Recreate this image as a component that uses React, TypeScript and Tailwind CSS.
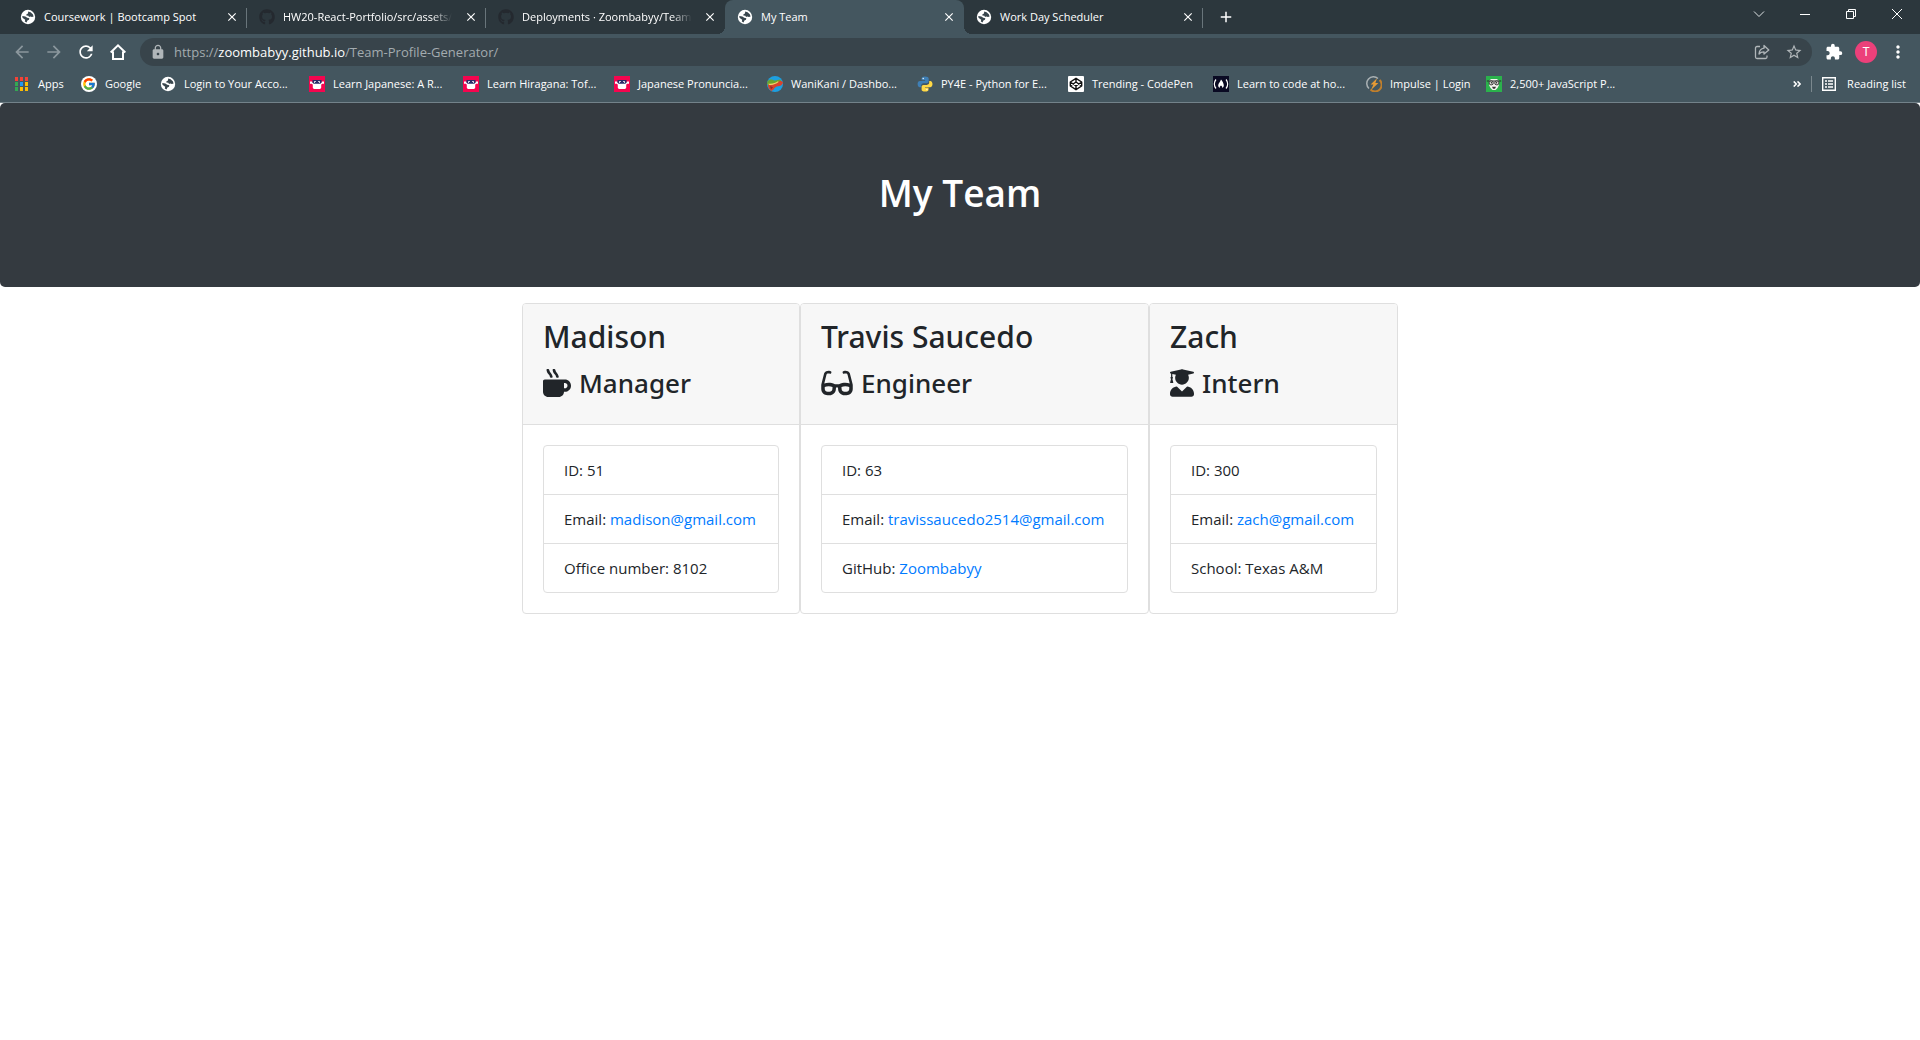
import React from "react";
import { FaGithub, FaGlasses, FaMugHot, FaUserGraduate } from "react-icons/fa";
import { FcGoogle } from "react-icons/fc";
import {
  MdArrowBack,
  MdArrowForward,
  MdClose,
  MdExtension,
  MdLock,
  MdMoreVert,
  MdAdd,
  MdRefresh,
  MdStarBorder,
} from "react-icons/md";

function Globe() {
  return (
    <svg viewBox="0 0 16 16" className="size-4 shrink-0" aria-hidden="true">
      <circle cx="8" cy="8" r="7.2" fill="#fff" />
      <path
        d="M8.2 2.6 10.6 3.2 12.8 5.2 13.6 7.4 12 8.1 10.2 7.5 9 7.9 8.4 6.8 6.3 6.4 6.5 5.2 8 4.6Z M2.3 7 5.4 7.4 7.2 8.8 9.3 9.2 9 10.8 7.4 11.6 6.6 13.4 4.8 12.6 5.2 10.8 3.4 9.6 2.4 8.4Z"
        fill="#39464d"
      />
    </svg>
  );
}

function Tofugu() {
  return (
    <svg viewBox="0 0 16 16" className="size-4" aria-hidden="true">
      <path d="M0 0h16v16H0z" fill="#f5054f" />
      <path d="M1 5.5h2l1 1.2h8l1-1.2h2v2.2h-2l-.8 1v3l-1 1.3H4.8l-1-1.3v-3L3 7.7H1z" fill="#fff" />
      <path d="M3.5 4h9v2.2l-1 1.5h-7l-1-1.5z" fill="#2a2d6b" />
      <path d="M5 5.2h2v1.6H5zM9 5.2h2v1.6H9z" fill="#fff" />
      <path d="M6 6h1v1H6zM9 6h1v1H9z" fill="#2a2d6b" />
    </svg>
  );
}

function WaniKani() {
  return (
    <svg viewBox="0 0 16 16" className="size-4" aria-hidden="true">
      <circle cx="8" cy="8" r="8" fill="#1d9fe0" />
      <path d="M.6 5C2 3.600 4 3 6 3.900c2 .9 4.500.5 6.800-.3L14.500 5 10 7.500 2 9.500 0 8z" fill="#6da32c" />
      <path d="M1 8.5c3 .8 8-1 10-2.500 1.500-1.300 3.500-1.500 5 .5-.4 2.500-2.400 3.500-5 3.700-1.800.2-3.600 1.200-4.400 3.400L4.500 15C2 13.500.7 11 1 8.500z" fill="#d8432b" />
      <path d="M1.500 7.600c3.500.8 7-.7 9.500-2.300l.6.8c-3 2.300-6.500 3.300-9.800 2.600z" fill="#f5d568" />
      <path d="M3 10l3 1.200-2 2.300z" fill="#8d2c26" />
    </svg>
  );
}

function Python() {
  return (
    <svg viewBox="0 0 16 16" className="size-4" aria-hidden="true">
      <path d="M7.9.6C5.500.6 4.600 1.400 4.600 2.700v1.600h3.500v.6H3C1.500 4.900.6 6.100.6 8s.9 3.200 2.200 3.200h1.400V9.500c0-1.300 1-2.300 2.300-2.300h3.300c1.100 0 1.900-.9 1.900-1.900V2.700C11.700 1.400 10.400.6 7.900.6z" fill="#3f7fb5" />
      <circle cx="6.2" cy="2.5" r=".7" fill="#fff" />
      <path d="M8.2 15.5c2.400 0 3.300-.8 3.300-2.100v-1.600H8v-.6h5.100c1.500 0 2.400-1.200 2.400-3.100s-.9-3.200-2.200-3.200h-1.100v1.700c0 1.300-1 2.300-2.300 2.300H6.500c-1.100 0-1.900.9-1.900 1.900v2.600c0 1.300 1.200 2.100 3.600 2.100z" fill="#ffd845" />
      <circle cx="9.9" cy="13.6" r=".7" fill="#fff" />
    </svg>
  );
}

function CodePen() {
  return (
    <svg viewBox="0 0 16 16" className="size-4" aria-hidden="true">
      <rect width="16" height="16" rx="1" fill="#fff" />
      <path
        d="M8 2.3 13.7 6v4L8 13.7 2.3 10V6zM8 2.3V6M8 10v3.7M2.3 6 8 10l5.7-4M2.3 10 8 6l5.7 4"
        fill="none"
        stroke="#111"
        strokeWidth="1.4"
        strokeLinejoin="round"
      />
    </svg>
  );
}

function FreeCodeCamp() {
  return (
    <svg viewBox="0 0 16 16" className="size-4" aria-hidden="true">
      <path d="M0 0h16v16H0z" fill="#0a0a23" />
      <path d="M3 3.5C.8 6 .8 10 3 12.5M13 3.5c2.200 2.500 2.200 6.500 0 9" fill="none" stroke="#fff" strokeWidth="1.2" />
      <path d="M8 3.5c1.400 1.600 2.800 4 2.800 6 0 1.200-.7 2-1.600 2.500.3-1.200-.3-2-1.200-2.600-.9.6-1.500 1.400-1.200 2.600-.9-.5-1.600-1.300-1.600-2.500 0-2 2-3.400 2.800-6z" fill="#fff" />
    </svg>
  );
}

function Impulse() {
  return (
    <svg viewBox="0 0 16 16" className="size-4" aria-hidden="true">
      <path d="M12 2.500A6.500 6.500 0 0 0 3 12.500" fill="none" stroke="#a9b0b3" strokeWidth="1.5" />
      <path d="M13.600 4A6.600 6.600 0 0 1 4.500 13.600" fill="none" stroke="#c07f2c" strokeWidth="2" />
      <path d="M11 2.200 4.600 8.600h2.800L5 14 12.400 7H9.400z" fill="#e79a35" />
    </svg>
  );
}

function FaceWithGlasses() {
  return (
    <svg viewBox="0 0 16 16" className="size-4" aria-hidden="true">
      <path d="M0 0h16v16H0z" fill="#2bb24c" />
      <path d="M5 3h6l2 2v4l-1.500 3L9.500 14h-3l-2-2L3 9V5z" fill="#f4f4f0" />
      <path d="M.8 5h14.400" stroke="#2a2a2a" strokeWidth="1" />
      <rect x="3.200" y="5" width="4" height="3.800" rx="1.600" fill="#dcdcd8" stroke="#2a2a2a" />
      <rect x="8.800" y="5" width="4" height="3.800" rx="1.600" fill="#dcdcd8" stroke="#2a2a2a" />
      <circle cx="5.500" cy="6.800" r=".7" fill="#222" />
      <circle cx="10.500" cy="6.800" r=".7" fill="#222" />
      <path d="M6 10.800h4L9 12.800H7z" fill="#333" />
    </svg>
  );
}

function AppsGrid() {
  const colors = [
    "#f44336", "#f44336", "#f44336",
    "#34a853", "#2196f3", "#fbbc05",
    "#34a853", "#fbbc05", "#fbbc05",
  ];
  return (
    <svg viewBox="0 0 13 14" className="h-3.5 w-[13px]" aria-hidden="true">
      {colors.map((c, i) => (
        <rect key={i} x={(i % 3) * 5} y={Math.floor(i / 3) * 5} width="3" height="4" fill={c} />
      ))}
    </svg>
  );
}

function Google() {
  return (
    <span className="flex size-4 items-center justify-center rounded-full bg-white">
      <FcGoogle className="size-3.5" />
    </span>
  );
}

const tabs = [
  { title: "Coursework | Bootcamp Spot", icon: <Globe />, active: false, divider: true, fade: false },
  { title: "HW20-React-Portfolio/src/assets/", icon: <FaGithub className="size-4 shrink-0 text-[#24292f]" />, active: false, divider: true, fade: true },
  { title: "Deployments · Zoombabyy/Team", icon: <FaGithub className="size-4 shrink-0 text-[#24292f]" />, active: false, divider: false, fade: true },
  { title: "My Team", icon: <Globe />, active: true, divider: false, fade: false },
  { title: "Work Day Scheduler", icon: <Globe />, active: false, divider: true, fade: false },
];

const bookmarks = [
  { label: "Apps", icon: <AppsGrid />, width: "w-[66px]", gap: "gap-[10px]" },
  { label: "Google", icon: <Google />, width: "w-[79px]", gap: "gap-2" },
  { label: "Login to Your Acco...", icon: <Globe />, width: "w-[149px]", gap: "gap-2" },
  { label: "Learn Japanese: A R...", icon: <Tofugu />, width: "w-[154px]", gap: "gap-2" },
  { label: "Learn Hiragana: Tof...", icon: <Tofugu />, width: "w-[151px]", gap: "gap-2" },
  { label: "Japanese Pronuncia...", icon: <Tofugu />, width: "w-[153px]", gap: "gap-2" },
  { label: "WaniKani / Dashbo...", icon: <WaniKani />, width: "w-[150px]", gap: "gap-2" },
  { label: "PY4E - Python for E...", icon: <Python />, width: "w-[151px]", gap: "gap-2" },
  { label: "Trending - CodePen", icon: <CodePen />, width: "w-[145px]", gap: "gap-2" },
  { label: "Learn to code at ho...", icon: <FreeCodeCamp />, width: "w-[153px]", gap: "gap-2" },
  { label: "Impulse | Login", icon: <Impulse />, width: "w-[120px]", gap: "gap-2" },
  { label: "2,500+ JavaScript P...", icon: <FaceWithGlasses />, width: "w-[154px]", gap: "gap-2" },
];

function TabStrip() {
  return (
    <div className="flex h-[34px] bg-[#2c373d] pl-2">
      {tabs.map((tab) => (
        <div
          key={tab.title}
          className={
            tab.active
              ? "relative flex w-[239px] items-center rounded-t-lg bg-[#44565f] pr-2 pl-3 before:absolute before:bottom-0 before:-left-2 before:size-2 before:bg-[radial-gradient(circle_at_0_0,transparent_8px,#44565f_8px)] after:absolute after:-right-2 after:bottom-0 after:size-2 after:bg-[radial-gradient(circle_at_100%_0,transparent_8px,#44565f_8px)]"
              : "relative flex w-[239px] items-center pr-2 pl-3"
          }
        >
          {tab.icon}
          <span
            className={
              tab.fade
                ? "ml-2 whitespace-nowrap [mask-image:linear-gradient(to_right,#000_88%,transparent)]"
                : "ml-2 whitespace-nowrap"
            }
          >
            {tab.title}
          </span>
          <button aria-label={`Close ${tab.title}`} className="ml-auto shrink-0">
            <MdClose className="size-3.5" />
          </button>
          {tab.divider && <span className="absolute top-2 right-0 h-5 w-px bg-[#69757b]" />}
        </div>
      ))}
      <button aria-label="New tab" className="ml-2.5 flex w-[26px] items-center justify-center">
        <MdAdd className="size-[18px]" />
      </button>
      <div className="ml-auto flex h-7">
        <button aria-label="Search tabs" className="flex w-[46px] items-center justify-center">
          <svg viewBox="0 0 12 12" className="size-3" fill="none" stroke="#dfe3e5"><path d="M1 3.5l5 5 5-5" /></svg>
        </button>
        <button aria-label="Minimize" className="flex w-[46px] items-center justify-center">
          <svg viewBox="0 0 10 10" className="size-2.5" fill="none" stroke="#fff"><path d="M0 5.5h10" /></svg>
        </button>
        <button aria-label="Restore" className="flex w-[46px] items-center justify-center">
          <svg viewBox="0 0 10 10" className="size-2.5" fill="none" stroke="#fff"><path d="M.5 2.5h7v7h-7zM2.5 2.5v-2h7v7h-2" /></svg>
        </button>
        <button aria-label="Close window" className="flex w-[46px] items-center justify-center">
          <svg viewBox="0 0 10 10" className="size-2.5" fill="none" stroke="#fff"><path d="M0 0l10 10M10 0L0 10" /></svg>
        </button>
      </div>
    </div>
  );
}

function AddressBar() {
  return (
    <div className="flex h-9 items-center px-1.5">
      <button aria-label="Back" className="flex w-8 justify-center text-[#8b979d]"><MdArrowBack className="size-5" /></button>
      <button aria-label="Forward" className="flex w-8 justify-center text-[#8b979d]"><MdArrowForward className="size-5" /></button>
      <button aria-label="Reload" className="flex w-8 justify-center"><MdRefresh className="size-5" /></button>
      <button aria-label="Home" className="flex w-8 justify-center">
        <svg viewBox="0 0 18 18" className="size-[18px]" fill="none" stroke="#fff" strokeWidth="2">
          <path d="M1.7 9.5 9 2.3l7.3 7.2M4 8.5V16h10V8.5" />
        </svg>
      </button>
      <div className="ml-1.5 flex h-7 flex-1 items-center rounded-full bg-[#38444b] pr-0.5 pl-2.5">
        <MdLock className="size-4 text-[#b0b6b9]" />
        <div role="textbox" aria-label="Address" tabIndex={0} className="ml-2 text-[13px] leading-5 text-[#a3abaf]">
          https://<span className="text-white">zoombabyy.github.io</span>/Team-Profile-Generator/
        </div>
        <button aria-label="Share" className="ml-auto flex w-8 justify-center text-[#b0b6b9]">
          <svg viewBox="0 0 16 16" className="size-4" fill="none" stroke="currentColor" strokeWidth="1.3" strokeLinejoin="round">
            <path d="M6 2.5H3A1.5 1.5 0 0 0 1.5 4v9A1.5 1.5 0 0 0 3 14.5h8.500A1.5 1.5 0 0 0 13 13v-1.500" />
            <path d="M10 1.5 14.800 6 10 10V7.800c-2.500 0-4 .8-5 2.200.3-3 1.800-5.400 5-5.800z" />
          </svg>
        </button>
        <button aria-label="Bookmark this page" className="flex w-8 justify-center text-[#b0b6b9]"><MdStarBorder className="size-[18px]" /></button>
      </div>
      <button aria-label="Extensions" className="ml-1.5 flex w-8 justify-center"><MdExtension className="size-[18px]" /></button>
      <button aria-label="Profile" className="mx-[5px] flex size-[22px] items-center justify-center rounded-full bg-[#ec407a] font-['Roboto'] text-[12px]">T</button>
      <button aria-label="Menu" className="flex w-8 justify-center"><MdMoreVert className="size-5" /></button>
    </div>
  );
}

function BookmarksBar() {
  return (
    <div className="flex h-[33px] items-start border-b border-[#73828a] pr-3.5 pl-[15px]">
      {bookmarks.map((b) => (
        <a key={b.label} href="#" className={`flex h-7 shrink-0 items-center whitespace-nowrap ${b.width} ${b.gap}`}>
          <span className="shrink-0">{b.icon}</span>
          {b.label}
        </a>
      ))}
      <div className="ml-auto flex h-7 items-center">
        <button aria-label="More bookmarks">
          <svg viewBox="0 0 8 6" className="h-1.5 w-2" fill="none" stroke="#fff" strokeWidth="1.5"><path d="M.7.4 3.3 3 .7 5.600M4.500.4 7.100 3 4.500 5.600" /></svg>
        </button>
        <span className="mx-[10px] h-4 w-px bg-[#7b888e]" />
        <button className="flex items-center gap-[11px]">
          <svg viewBox="0 0 14 14" className="size-[14px]" fill="none" stroke="#fff" strokeWidth="1.4">
            <path d="M.7.7h12.600v12.600H.7zM3 4h2M6 4h5M3 7h2M6 7h5M3 10h2M6 10h5" />
          </svg>
          Reading list
        </button>
      </div>
    </div>
  );
}

type Row = { label: string; value: string; href?: string };

const team: { name: string; role: string; icon: React.ReactNode; width: string; rows: Row[] }[] = [
  {
    name: "Madison",
    role: "Manager",
    icon: <FaMugHot className="h-7 w-7" />,
    width: "min-w-[278px]",
    rows: [
      { label: "ID", value: "51" },
      { label: "Email", value: "madison@gmail.com", href: "mailto:madison@gmail.com" },
      { label: "Office number", value: "8102" },
    ],
  },
  {
    name: "Travis Saucedo",
    role: "Engineer",
    icon: <FaGlasses className="h-7 w-8" />,
    width: "min-w-[349px]",
    rows: [
      { label: "ID", value: "63" },
      { label: "Email", value: "travissaucedo2514@gmail.com", href: "mailto:travissaucedo2514@gmail.com" },
      { label: "GitHub", value: "Zoombabyy", href: "https://github.com/Zoombabyy" },
    ],
  },
  {
    name: "Zach",
    role: "Intern",
    icon: <FaUserGraduate className="h-7 w-6" />,
    width: "min-w-[249px]",
    rows: [
      { label: "ID", value: "300" },
      { label: "Email", value: "zach@gmail.com", href: "mailto:zach@gmail.com" },
      { label: "School", value: "Texas A&M" },
    ],
  },
];

export default function App() {
  return (
    <div className="min-h-screen bg-white font-['Open_Sans','Noto_Sans',sans-serif] text-[#212529]">
      <header className="bg-[#44565f] text-[11px] text-white">
        <TabStrip />
        <AddressBar />
        <BookmarksBar />
      </header>
      <main>
        <div className="mb-4 rounded-[5px] bg-[#343a40] px-8 pt-[66px] pb-[70px]">
          <h1 className="text-center text-[37px] leading-[48px] font-semibold text-white">My Team</h1>
        </div>
        <div className="flex flex-wrap justify-center">
          {team.map((m) => (
            <section key={m.name} className={`rounded border border-[#dfdfdf] ${m.width}`}>
              <div className="rounded-t-[3px] border-b border-[#dfdfdf] bg-[#f7f7f7] px-5 pt-3.5 pb-5">
                <h2 className="mb-2.5 font-['Noto_Sans'] text-[30px] leading-[38px] font-medium">{m.name}</h2>
                <h3 className="mb-1 flex items-center gap-2 font-['Noto_Sans'] text-[26px] leading-[34px] font-medium">
                  {m.icon}
                  {m.role}
                </h3>
              </div>
              <div className="p-5">
                <ul className="divide-y divide-[#dfdfdf] rounded border border-[#dfdfdf] text-[15px] leading-6">
                  {m.rows.map((r) => (
                    <li key={r.label} className="px-5 py-3 whitespace-nowrap">
                      {r.label}: {r.href ? <a href={r.href} className="text-[#007bff]">{r.value}</a> : r.value}
                    </li>
                  ))}
                </ul>
              </div>
            </section>
          ))}
        </div>
      </main>
    </div>
  );
}
